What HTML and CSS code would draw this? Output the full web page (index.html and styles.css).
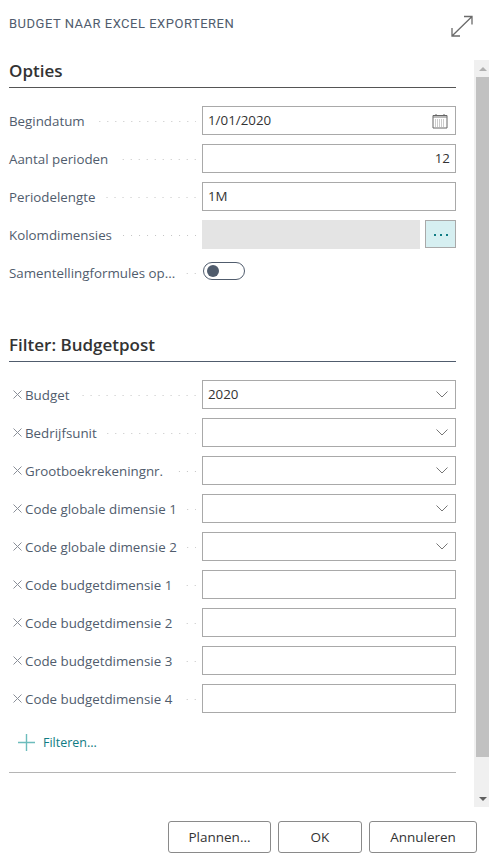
FILE: index.html
```html
<!DOCTYPE html>
<html lang="en">
<head>
  <meta charset="UTF-8">
  <title>Budget naar Excel exporteren</title>
  <link rel="stylesheet" href="styles.css">
</head>
<body>
  <header>
    <span class="title">BUDGET NAAR EXCEL EXPORTEREN</span>
    <svg class="expand" width="24" height="24" viewBox="0 0 24 24"><path d="M3 22 L23 2.5 M15 2.5 H23 V10.500 M3 14 V22 H11" fill="none" stroke="#6b6b6b" stroke-width="1.3"/></svg>
  </header>
  <main>
    <div class="content">
      <h2>Opties</h2>
      <div class="row"><span class="label">Begindatum</span><span class="dots"></span>
        <div class="field">1/01/2020
          <svg class="cal" width="16" height="16" viewBox="0 0 16 16"><path d="M1 2.500 H15 V15 H1 Z" fill="#fff" stroke="#666"/><path d="M1 4 H15" stroke="#777"/><path d="M4 1 V3 M12 1 V3" stroke="#666"/><path d="M3 7 H13 M3 9 H13 M3 11 H13 M3 13 H13" stroke="#999" stroke-dasharray="1 1"/></svg>
        </div>
      </div>
      <div class="row"><span class="label">Aantal perioden</span><span class="dots"></span><div class="field num">12</div></div>
      <div class="row"><span class="label">Periodelengte</span><span class="dots"></span><div class="field">1M</div></div>
      <div class="row"><span class="label">Kolomdimensies</span><span class="dots"></span>
        <div class="field-wrap"><div class="field off"></div><div class="more"><i></i><i></i><i></i></div></div>
      </div>
      <div class="row"><span class="label">Samentellingformules op...</span><span class="dots"></span>
        <div class="ctl"><span class="toggle"></span></div>
      </div>

      <h2 class="second">Filter: Budgetpost</h2>
      <div class="row"><svg class="x" width="9" height="9" viewBox="0 0 9 9"><path d="M.5 .5 L8.500 8.500 M8.500 .5 L.5 8.500" stroke="#8a8f98"/></svg><span class="label">Budget</span><span class="dots"></span><div class="field sel">2020<svg class="chev" width="12" height="7" viewBox="0 0 12 7"><path d="M.5 .5 L6 6 L11.500 .5" fill="none" stroke="#777"/></svg></div></div>
      <div class="row"><svg class="x" width="9" height="9" viewBox="0 0 9 9"><path d="M.5 .5 L8.500 8.500 M8.500 .5 L.5 8.500" stroke="#8a8f98"/></svg><span class="label">Bedrijfsunit</span><span class="dots"></span><div class="field sel"><svg class="chev" width="12" height="7" viewBox="0 0 12 7"><path d="M.5 .5 L6 6 L11.500 .5" fill="none" stroke="#777"/></svg></div></div>
      <div class="row"><svg class="x" width="9" height="9" viewBox="0 0 9 9"><path d="M.5 .5 L8.500 8.500 M8.500 .5 L.5 8.500" stroke="#8a8f98"/></svg><span class="label">Grootboekrekeningnr.</span><span class="dots"></span><div class="field sel"><svg class="chev" width="12" height="7" viewBox="0 0 12 7"><path d="M.5 .5 L6 6 L11.500 .5" fill="none" stroke="#777"/></svg></div></div>
      <div class="row"><svg class="x" width="9" height="9" viewBox="0 0 9 9"><path d="M.5 .5 L8.500 8.500 M8.500 .5 L.5 8.500" stroke="#8a8f98"/></svg><span class="label">Code globale dimensie 1</span><span class="dots"></span><div class="field sel"><svg class="chev" width="12" height="7" viewBox="0 0 12 7"><path d="M.5 .5 L6 6 L11.500 .5" fill="none" stroke="#777"/></svg></div></div>
      <div class="row"><svg class="x" width="9" height="9" viewBox="0 0 9 9"><path d="M.5 .5 L8.500 8.500 M8.500 .5 L.5 8.500" stroke="#8a8f98"/></svg><span class="label">Code globale dimensie 2</span><span class="dots"></span><div class="field sel"><svg class="chev" width="12" height="7" viewBox="0 0 12 7"><path d="M.5 .5 L6 6 L11.500 .5" fill="none" stroke="#777"/></svg></div></div>
      <div class="row"><svg class="x" width="9" height="9" viewBox="0 0 9 9"><path d="M.5 .5 L8.500 8.500 M8.500 .5 L.5 8.500" stroke="#8a8f98"/></svg><span class="label">Code budgetdimensie 1</span><span class="dots"></span><div class="field"></div></div>
      <div class="row"><svg class="x" width="9" height="9" viewBox="0 0 9 9"><path d="M.5 .5 L8.500 8.500 M8.500 .5 L.5 8.500" stroke="#8a8f98"/></svg><span class="label">Code budgetdimensie 2</span><span class="dots"></span><div class="field"></div></div>
      <div class="row"><svg class="x" width="9" height="9" viewBox="0 0 9 9"><path d="M.5 .5 L8.500 8.500 M8.500 .5 L.5 8.500" stroke="#8a8f98"/></svg><span class="label">Code budgetdimensie 3</span><span class="dots"></span><div class="field"></div></div>
      <div class="row"><svg class="x" width="9" height="9" viewBox="0 0 9 9"><path d="M.5 .5 L8.500 8.500 M8.500 .5 L.5 8.500" stroke="#8a8f98"/></svg><span class="label">Code budgetdimensie 4</span><span class="dots"></span><div class="field"></div></div>

      <div class="add">
        <svg width="17" height="17" viewBox="0 0 17 17"><path d="M0 8.500 H17 M8.500 0 V17" stroke="#6cbcbc" stroke-width="1.4"/></svg>
        <span>Filteren...</span>
      </div>
      <div class="rule"></div>
    </div>
    <div class="scrollbar">
      <div class="arrow up"></div>
      <div class="thumb"></div>
      <div class="arrow down"></div>
    </div>
  </main>
  <footer>
    <button class="plan">Plannen...</button>
    <button class="ok">OK</button>
    <button class="cancel">Annuleren</button>
  </footer>
</body>
</html>
```

FILE: styles.css
```css
* {
  margin: 0;
  padding: 0;
  box-sizing: border-box;
  font-family: "Open Sans", "Noto Sans", sans-serif;
}
html, body {
  width: 489px;
  height: 860px;
  overflow: hidden;
  background-color: #fff;
}
header {
  height: 60px;
  padding: 16px 16px 0 9px;
  display: flex;
  justify-content: space-between;
  align-items: flex-start;
}
.title {
  font-family: "Roboto", sans-serif;
  font-size: 13px;
  line-height: 15px;
  letter-spacing: .5px;
  color: #505c6d;
}
.expand {
  margin-top: -2px;
}
main {
  height: 747px;
  display: flex;
  justify-content: space-between;
}
.content {
  width: 456px;
  padding-left: 9px;
}
h2 {
  font-size: 17px;
  font-weight: 600;
  line-height: 22px;
  color: #333;
  height: 28px;
  border-bottom: 1px solid #555;
  margin-bottom: 18px;
}
h2.second {
  margin-top: 47px;
  border-bottom-color: #505c6d;
}
.row {
  height: 29px;
  margin-bottom: 9px;
  display: flex;
  align-items: center;
  font-size: 13.33px;
  color: #505c6d;
}
.label {
  white-space: nowrap;
}
.x {
  flex: none;
  margin: 0 3px 0 4px;
}
.dots {
  flex: 1;
  height: 1px;
  margin: 2px 6px 0 9px;
  background-image: linear-gradient(to left, #c4c4c4 1px, transparent 1px);
  background-size: 8px 1px;
  background-position: right;
  background-repeat: repeat-x;
}
.field {
  width: 254px;
  height: 29px;
  flex: none;
  border: 1px solid #a9a9a9;
  padding: 0 5px;
  line-height: 27px;
  color: #333;
  display: flex;
  justify-content: space-between;
  align-items: center;
}
.field.num {
  justify-content: flex-end;
}
.field.sel {
  padding-right: 7px;
}
.field.sel .chev {
  margin-left: auto;
}
.cal {
  margin-right: 2px;
}
.field-wrap {
  width: 254px;
  flex: none;
  display: flex;
  justify-content: space-between;
}
.field.off {
  width: 218px;
  border: none;
  background-color: #e4e4e4;
}
.more {
  width: 31px;
  height: 28px;
  border: 1px solid #a9a9a9;
  background-color: #d6eff1;
  display: flex;
  justify-content: center;
  align-items: center;
  gap: 4px;
  padding-top: 1px;
}
.more i {
  width: 2px;
  height: 2px;
  background-color: #0f7c84;
}
.ctl {
  width: 254px;
  flex: none;
}
.toggle {
  display: block;
  width: 42px;
  height: 18px;
  margin: 0 0 3px 1px;
  border: 1px solid #505c6d;
  border-radius: 9px;
  position: relative;
}
.toggle::before {
  content: "";
  position: absolute;
  left: 3px;
  top: 2px;
  width: 12px;
  height: 12px;
  border-radius: 50%;
  background-color: #505c6d;
}
.add {
  height: 18px;
  margin: 20px 0 21px 9px;
  display: flex;
  align-items: center;
  gap: 8px;
  font-size: 12.500px;
  color: #0f7c84;
}
.rule {
  height: 1px;
  background-color: #b5b5b5;
}
.scrollbar {
  width: 15px;
  background-color: #f0f0f0;
  display: flex;
  flex-direction: column;
  align-items: flex-end;
}
.arrow {
  width: 13px;
  height: 17px;
  display: flex;
  align-items: center;
  justify-content: center;
}
.arrow::before {
  content: "";
  border-left: 4px solid transparent;
  border-right: 4px solid transparent;
}
.arrow.up::before {
  border-bottom: 4px solid #b0b0b0;
}
.arrow.down::before {
  border-top: 4px solid #606060;
}
.thumb {
  width: 13px;
  flex: 1;
  margin-bottom: 33px;
  background-color: #c1c1c1;
}
footer {
  display: flex;
  justify-content: flex-end;
  gap: 7px;
  padding: 14px 12px 0 0;
}
button {
  height: 32px;
  background-color: #fff;
  border: 1px solid #8a8a8a;
  border-radius: 3px;
  font-size: 13.5px;
  font-weight: 500;
  color: #333;
}
.plan { width: 103px; }
.ok { width: 84px; }
.cancel { width: 108px; }
```
